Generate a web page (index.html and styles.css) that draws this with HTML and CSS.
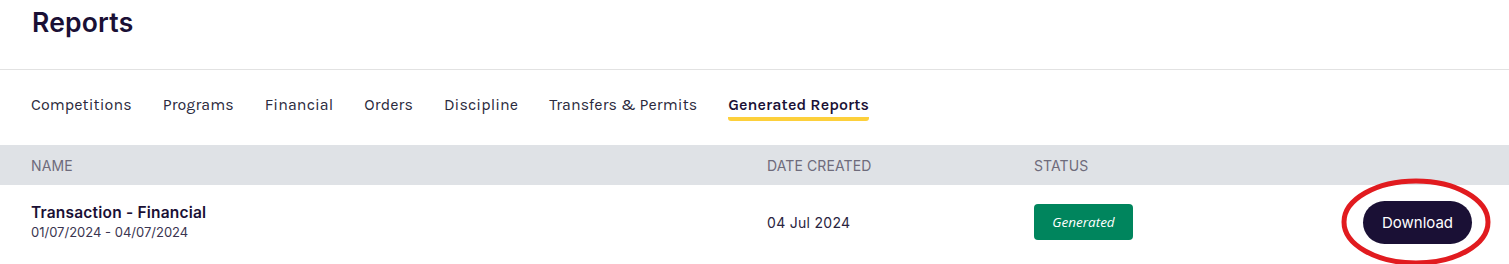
FILE: index.html
```html
<!DOCTYPE html>
<html lang="en">
<head>
    <meta charset="UTF-8">
    <meta name="viewport" content="width=device-width, initial-scale=1.0">
    <title>Reports</title>
    <link rel="stylesheet" href="styles.css">
</head>
<body>
    <header class="page-header">
        <h1>Reports</h1>
    </header>

    <nav class="tabs">
        <a class="tab">Competitions</a>
        <a class="tab">Programs</a>
        <a class="tab">Financial</a>
        <a class="tab">Orders</a>
        <a class="tab">Discipline</a>
        <a class="tab">Transfers &amp; Permits</a>
        <a class="tab active">Generated Reports</a>
    </nav>

    <div class="table">
        <div class="table-head">
            <span>Name</span>
            <span>Date Created</span>
            <span>Status</span>
            <span></span>
        </div>
        <div class="table-row">
            <div class="report-name">
                <strong>Transaction - Financial</strong>
                <span>01/07/2024 - 04/07/2024</span>
            </div>
            <div class="report-date">04 Jul 2024</div>
            <div><span class="badge">Generated</span></div>
            <div class="actions">
                <button class="btn-download">Download</button>
                <!-- marca roja alrededor del botón -->
                <svg class="highlight" width="154" height="92" viewBox="0 0 154 92">
                    <ellipse cx="76" cy="45" rx="72" ry="41" fill="none" stroke="#e11b1f" stroke-width="5"/>
                </svg>
            </div>
        </div>
    </div>
</body>
</html>
```

FILE: styles.css
```css
:root {
    --ink: #1a1035;
    --muted: #6e6b7b;
    --line: #e2e2e2;
    --head-bg: #dfe2e6;
    --accent: #fdd03b;
    --success: #00855d;
}

* {
    box-sizing: border-box;
    margin: 0;
    padding: 0;
}

body {
    font-family: 'Inter', 'Noto Sans', sans-serif;
    color: var(--ink);
    background: #fff;
    overflow: hidden;
}

.page-header {
    height: 70px;
    padding: 4px 32px 0;
    border-bottom: 1px solid var(--line);
}

.page-header h1 {
    font-size: 26.5px;
    font-weight: 600;
    line-height: 36px;
    letter-spacing: 0.2px;
}

.tabs {
    display: flex;
    gap: 31px;
    padding: 0 31px;
    height: 75px;
    padding-top: 25px;
}

.tab {
    font-family: 'Karla', 'Inter', sans-serif;
    font-size: 16px;
    line-height: 20px;
    color: #2b2a3d;
    height: 26px;
    letter-spacing: 0.1px;
}

.tab.active {
    font-weight: 600;
    color: var(--ink);
    border-bottom: 4px solid var(--accent);
    border-radius: 0 0 3px 3px;
    height: 26px;
}

.table-head,
.table-row {
    display: grid;
    grid-template-columns: 736px 267px 1fr auto;
    padding: 0 37px 0 31px;
    align-items: center;
}

.table-head {
    background: var(--head-bg);
    height: 40px;
    font-size: 14px;
    text-transform: uppercase;
    color: var(--muted);
    letter-spacing: 0.1px;
}

.table-row {
    height: 79px;
    padding-bottom: 5px;
}

.report-name {
    display: flex;
    flex-direction: column;
    gap: 1px;
    margin-top: -1px;
}

.report-name strong {
    font-size: 15.5px;
    font-weight: 600;
    line-height: 19px;
    letter-spacing: 0.2px;
}

.report-name span {
    font-size: 13px;
    line-height: 16px;
    color: #3a3550;
    margin-top: 1px;
}

.report-date {
    font-size: 14px;
    letter-spacing: 0.3px;
    color: #2a2440;
}

.badge {
    display: inline-flex;
    align-items: center;
    justify-content: center;
    width: 99px;
    height: 36px;
    border-radius: 4px;
    background: var(--success);
    color: #fff;
    font-family: 'Open Sans', sans-serif;
    font-style: italic;
    font-size: 13.5px;
}

.actions {
    position: relative;
}

.btn-download {
    width: 109px;
    height: 43px;
    border: none;
    border-radius: 22px;
    background: var(--ink);
    color: #fff;
    font-family: 'Inter', sans-serif;
    font-size: 15px;
    cursor: pointer;
}

.highlight {
    position: absolute;
    left: -23px;
    top: -24px;
    pointer-events: none;
}
```
